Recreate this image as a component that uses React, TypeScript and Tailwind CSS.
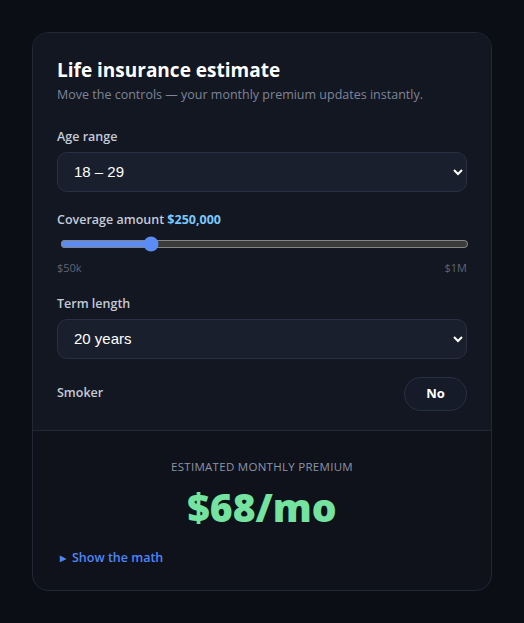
import { useState } from 'react';

const font = { fontFamily: '"Open Sans", "Noto Sans", sans-serif' };
const selectFont = { fontFamily: '"Liberation Sans", Arial, sans-serif' };

export default function App() {
  const [age, setAge] = useState('18-29');
  const [coverage, setCoverage] = useState(250000);
  const [term, setTerm] = useState('20');
  const [smoker, setSmoker] = useState(false);

  return (
    <div className="min-h-screen bg-[#0b0e15] p-8 [color-scheme:dark]" style={font}>
      <div className="w-[460px] rounded-2xl border border-[#232837] bg-[#0f121b] overflow-hidden">
        <div className="bg-[#131722] px-6 pt-[23px] pb-[19px] border-b border-[#232837]">
          <h1 className="text-[19px] font-bold text-white leading-7">Life insurance estimate</h1>
          <p className="text-[12.5px] text-[#7d8599] mt-0.5">Move the controls — your monthly premium updates instantly.</p>

          <label className="block text-[12.5px] font-semibold text-[#c3cad8] mt-[23px]">Age range</label>
          <select
            value={age}
            onChange={e => setAge(e.target.value)}
            className="mt-[5px] w-full h-10 rounded-[10px] border border-[#293044] bg-[#1a1f2e] pl-3 pr-2 text-[15px] text-white"
            style={selectFont}
          >
            <option value="18-29">18 – 29</option>
            <option value="30-39">30 – 39</option>
            <option value="40-49">40 – 49</option>
            <option value="50-59">50 – 59</option>
          </select>

          <div className="mt-[19px] text-[12.5px] font-semibold text-[#c3cad8]">
            Coverage amount <span className="text-[#7cc8fb] font-bold">${coverage.toLocaleString('en-US')}</span>
          </div>
          <input
            type="range"
            min={50000}
            max={1000000}
            step={10000}
            value={coverage}
            onChange={e => setCoverage(Number(e.target.value))}
            className="mt-[7px] ml-[3px] w-[calc(100%-1px)] accent-[#5b8cf5] block"
          />
          <div className="flex justify-between text-[11px] text-[#5d6577] mt-[8px]">
            <span>$50k</span>
            <span>$1M</span>
          </div>

          <label className="block text-[12.5px] font-semibold text-[#c3cad8] mt-[18px]">Term length</label>
          <select
            value={term}
            onChange={e => setTerm(e.target.value)}
            className="mt-[5px] w-full h-10 rounded-[10px] border border-[#293044] bg-[#1a1f2e] pl-3 pr-2 text-[15px] text-white"
            style={selectFont}
          >
            <option value="10">10 years</option>
            <option value="20">20 years</option>
            <option value="30">30 years</option>
          </select>

          <div className="flex items-center justify-between mt-[18px]">
            <span className="text-[12.5px] font-semibold text-[#c3cad8]">Smoker</span>
            <button
              onClick={() => setSmoker(!smoker)}
              className="h-[34px] w-[63px] rounded-full border border-[#293044] bg-[#161b29] text-[13px] font-bold text-white"
            >
              {smoker ? 'Yes' : 'No'}
            </button>
          </div>
        </div>

        <div className="px-6 pt-[27px] pb-[23px]">
          <div className="text-center text-[11.5px] uppercase tracking-wide text-[#8c95a8]">Estimated monthly premium</div>
          <div className="text-center text-[39px] font-extrabold text-[#74e3a0] leading-tight mt-2">$68/mo</div>
          <details className="mt-[17px]">
            <summary className="list-none flex items-center gap-1.5 pl-[3px] text-[12.5px] font-semibold text-[#4f86f7] cursor-pointer">
              <span className="text-[8px]">▶</span>
              Show the math
            </summary>
          </details>
        </div>
      </div>
    </div>
  );
}
